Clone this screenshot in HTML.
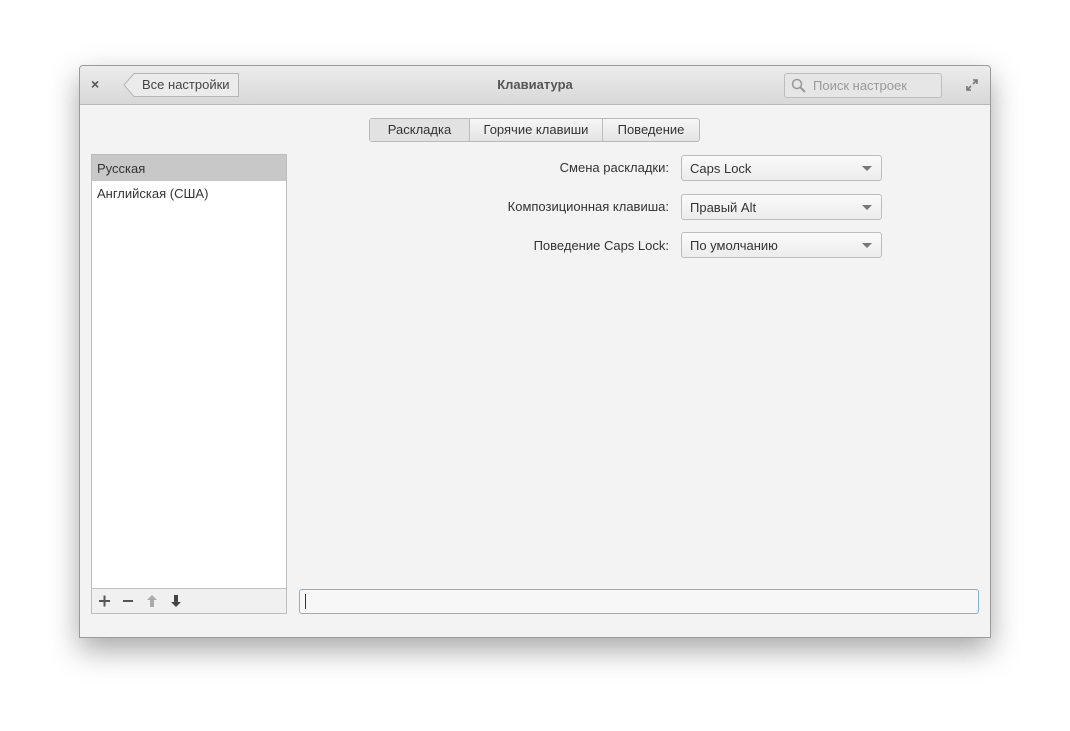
<!DOCTYPE html><html><head><meta charset="utf-8"><style>
body{margin:0;width:1070px;height:731px;background:#fff;font-family:"Liberation Sans","DejaVu Sans",sans-serif;font-size:13px;color:#333;position:relative;overflow:hidden}
.a{position:absolute;box-sizing:border-box}
.win{left:79px;top:65px;width:912px;height:573px;background:#f3f3f3;border:1px solid #9a9a9a;border-radius:4px 4px 0 0;box-shadow:0 12px 30px rgba(0,0,0,.35)}
.hdr{left:80px;top:66px;width:910px;height:39px;background:linear-gradient(#ececec,#d8d8d8);border-bottom:1px solid #b8b8b8;border-radius:4px 4px 0 0}
.btn{background:linear-gradient(#f6f6f6,#e4e4e4);border:1px solid #b9b9b9;border-radius:3px}
.dd{left:681px;width:201px;height:26px;background:linear-gradient(#fafafa,#ececec);border:1px solid #bcbcbc;border-radius:3px;padding:5px 8px;color:#333}
.dd:after{content:"";position:absolute;right:9px;top:10px;border:5px solid transparent;border-top:5px solid #777;border-bottom:0}
.lbl{right:401px;text-align:right;color:#333}
</style></head><body>
<div class="a win"></div>
<div class="a hdr"></div>
<div class="a" style="left:91px;top:76px;font-size:14px;color:#555;font-weight:bold">×</div>
<svg class="a" style="left:123px;top:73px" width="116" height="24"><path d="M11 .5H115.5V23.5H11L1 12Z" fill="#ebebeb" stroke="#b5b5b5"/></svg>
<div class="a" style="left:142px;top:77px;color:#444">Все настройки</div>
<div class="a" style="left:0;width:1070px;top:77px;text-align:center;font-weight:bold;color:#555">Клавиатура</div>
<div class="a" style="left:784px;top:73px;width:158px;height:25px;background:#e6e6e6;border:1px solid #bdbdbd;border-radius:3px"></div>
<svg class="a" style="left:791px;top:78px" width="16" height="16"><circle cx="6" cy="6" r="4.5" fill="none" stroke="#999" stroke-width="1.5"/><path d="M9.5 9.5L14 14" stroke="#999" stroke-width="2"/></svg>
<div class="a" style="left:813px;top:78px;color:#999">Поиск настроек</div>
<svg class="a" style="left:965px;top:78px" width="14" height="14"><path d="M8 2H12V6M12 2L8 6M2 8V12H6M2 12L6 8" stroke="#777" stroke-width="1.6" fill="none"/></svg>
<div class="a btn" style="left:369px;top:118px;width:331px;height:24px;display:flex;border-radius:3px">
<div style="width:99px;background:#e2e2e2;border-right:1px solid #bbb;text-align:center;line-height:22px">Раскладка</div>
<div style="width:132px;border-right:1px solid #bbb;text-align:center;line-height:22px">Горячие клавиши</div>
<div style="flex:1;text-align:center;line-height:22px">Поведение</div></div>
<div class="a" style="left:91px;top:154px;width:196px;height:460px;background:#fff;border:1px solid #bdbdbd"></div>
<div class="a" style="left:92px;top:155px;width:194px;height:26px;background:#c8c8c8;padding:6px 5px">Русская</div>
<div class="a" style="left:97px;top:186px">Английская (США)</div>
<div class="a" style="left:92px;top:588px;width:194px;height:25px;background:#f0f0f0;border-top:1px solid #c0c0c0"></div>
<svg class="a" style="left:96px;top:594px" width="90" height="14"><path d="M3 7H14M8.5 1.5V12.5M27 7H37" stroke="#555" stroke-width="2"/><path d="M56 1L51 6H54V13H58V6H61Z" fill="#aaa"/><path d="M80 13L75 8H78V1H82V8H85Z" fill="#444"/></svg>
<div class="a lbl" style="top:160px">Смена раскладки:</div>
<div class="a lbl" style="top:199px">Композиционная клавиша:</div>
<div class="a lbl" style="top:238px">Поведение Caps Lock:</div>
<div class="a dd" style="top:155px">Caps Lock</div>
<div class="a dd" style="top:194px">Правый Alt</div>
<div class="a dd" style="top:232px">По умолчанию</div>
<div class="a" style="left:299px;top:589px;width:680px;height:25px;background:#f7f7f7;border:1px solid #7fb2df;border-radius:3px"></div>
<div class="a" style="left:305px;top:594px;width:1px;height:15px;background:#333"></div>
</body></html>
